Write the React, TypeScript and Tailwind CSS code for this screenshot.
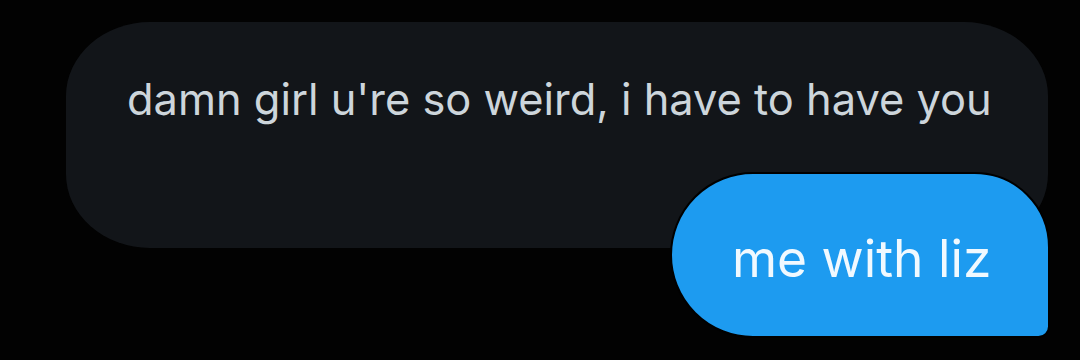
import React from 'react';

export default function App() {
  return (
    <div className="w-[1080px] h-[360px] bg-[#020202] overflow-hidden pt-[22px] font-['Inter',sans-serif]">
      {/* received message */}
      <div className="ml-[66px] w-[982px] h-[226px] bg-[#121519] rounded-[84px/74px] pl-[61px] pt-[51px]">
        <p className="text-[43.4px] leading-[52px] text-[#cdd5db] whitespace-nowrap">
          damn girl u&apos;re so weird, i have to have you
        </p>
      </div>

      {/* sent message, overlapping the one above */}
      <div className="flex justify-end mr-[30px] -mt-[76px]">
        <div className="w-[380px] h-[166px] bg-[#1d9bf0] border-2 border-black rounded-tl-[86px] rounded-tr-[78px] rounded-bl-[86px] rounded-br-[12px] pl-[60px] pt-[53px]">
          <p className="text-[51.5px] leading-[62px] text-[#f0f9ff] whitespace-nowrap">
            me with liz
          </p>
        </div>
      </div>
    </div>
  );
}
